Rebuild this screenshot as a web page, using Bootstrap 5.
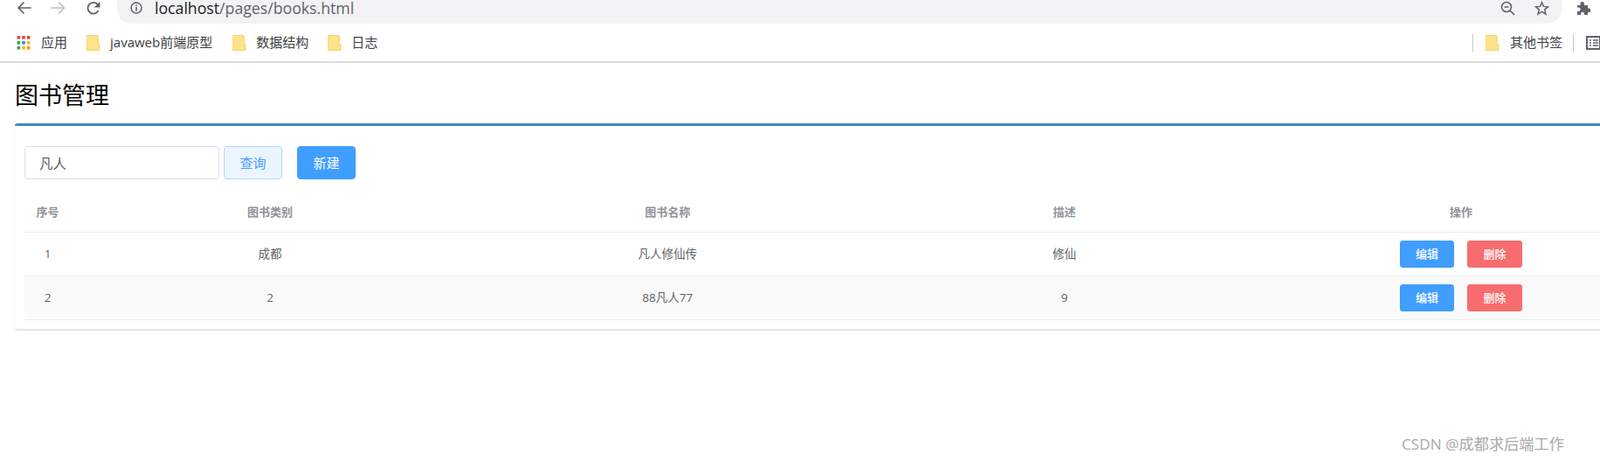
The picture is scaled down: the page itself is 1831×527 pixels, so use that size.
<!DOCTYPE html>
<html lang="zh-CN">
<head>
<meta charset="utf-8">
<title>图书管理</title>
<link href="https://cdn.jsdelivr.net/npm/bootstrap@5.3.0/dist/css/bootstrap.min.css" rel="stylesheet">
<style>
html,body{height:100%;overflow:hidden;background:#fff}
body{font-family:"Open Sans","Noto Sans CJK SC",sans-serif;width:1831px;position:relative}
.tool-row{height:27px;padding-left:19px}
.tool-row svg{display:block;flex:none;margin-top:-9px}
.ico-back,.ico-next{margin-right:22px}
.ico-reload{margin-right:18px}
.url-box{width:1653px;height:27px;background:#f1f3f4;border-radius:0 0 16px 16px;padding-left:15px;padding-right:14px}
.url-text{font-size:17.7px;color:#5f6368;margin-left:14px;line-height:18px;font-family:"Open Sans",sans-serif;margin-top:-9px;white-space:nowrap}
.url-text b{font-weight:400;color:#202124}
.ico-zoom{margin-right:22px}
.ext-ico{margin-left:17px}
.mark-row{height:45px;padding-left:19px;border-bottom:2px solid #dcdcdc;font-size:15px;color:#3c4043;white-space:nowrap}
.mark-row svg{display:block;flex:none}
.mk{display:flex;align-items:center;margin-right:22px}
.mk svg{margin-right:11px}
.mk-apps svg{margin-right:12px}
.mk-wide{margin-right:23px}
.mk-other{margin-right:12px}
.mk-other svg{margin-right:12px}
.sep-line{width:1px;height:20px;background:#c8c8c8}
.sep-first{margin-right:14px}
.list-ico{margin-left:14px}
.page-title{font-size:27px;line-height:32px;font-weight:400;color:#000;margin:0;padding:21px 0 16px 17px;height:69px}
.book-panel{margin-left:17px;width:1900px;border-top:3px solid #3c8dbc;border-bottom:2px solid #e6e6e6;border-radius:3px 0 0 3px;height:237px;padding:23px 0 0 11px;box-shadow:-1px 0 0 #f8f8f8}
.search-row{height:38px;margin-bottom:15px}
.q-input{width:223px;height:38px;border:1px solid #dcdfe6;border-radius:4px;padding:0 16px;font-size:15.500px;color:#606266;font-family:inherit;flex:none}
.q-btn{width:67px;height:38px;margin-left:5px;margin-right:17px;padding:0;font-size:15px;color:#409eff;background:#ecf5ff;border:1px solid #b3d8ff;border-radius:4px}
.n-btn{width:67px;height:38px;padding:0;font-size:15px;color:#fff;background:#409eff;border:1px solid #409eff;border-radius:4px}
.book-table{table-layout:fixed;width:1871px;margin:0;font-size:13.5px;color:#606266;text-align:center;--bs-table-bg:transparent}
.book-table th,.book-table td{padding:0;border-bottom:1px solid #ebeef5;vertical-align:middle;color:#606266}
.book-table th{height:45.6px;font-weight:700;color:#909399;font-size:13px}
.book-table td{height:50px}
.book-table .alt-row td{background:#fafafa}
.s-btn{display:inline-block;width:62px;height:31px;padding:0;font-size:13px;font-weight:500;line-height:29px;color:#fff;border-radius:3px;border:1px solid transparent;vertical-align:middle}
.s-edit{background:#409eff;border-color:#409eff}
.s-del{background:#f76d6f;border-color:#f76d6f;margin-left:15px;width:63px}
.s-btn:hover{color:#fff}
.water-mark{position:absolute;left:1604px;top:495px;font-size:17.200px;line-height:26px;color:#a9a9a9;white-space:nowrap}
</style>
</head>
<body>
<div class="tool-row d-flex align-items-center">
  <svg class="ico-back" width="17" height="16" viewBox="0 0 17 16"><path d="M16.500 8H2.500M8.500 1.500 2 8l6.500 6.500" fill="none" stroke="#5f6368" stroke-width="1.700"/></svg>
  <svg class="ico-next" width="18" height="16" viewBox="0 0 18 16"><path d="M.5 8H15M9 1.500 15.500 8 9 14.500" fill="none" stroke="#bdc1c6" stroke-width="1.700"/></svg>
  <svg class="ico-reload" width="18" height="17" viewBox="0 0 16 16"><path d="M13.200 10.500A6 6 0 1 1 12.300 3.700" fill="none" stroke="#5f6368" stroke-width="1.800"/><path d="M15 .8V7H8.800z" fill="#5f6368"/></svg>
  <div class="url-box d-flex align-items-center">
    <svg width="14" height="14" viewBox="0 0 14 14"><circle cx="7" cy="7" r="6" fill="none" stroke="#5f6368" stroke-width="1.500"/><path d="M6.200 6h1.600v4.500H6.200zM6.200 3.300h1.600v1.600H6.200z" fill="#5f6368"/></svg>
    <div class="url-text"><b>localhost</b>/pages/books.html</div>
    <svg class="ms-auto ico-zoom" width="17" height="17" viewBox="0 0 17 17"><circle cx="7" cy="7" r="5.500" fill="none" stroke="#5f6368" stroke-width="1.600"/><path d="M4.500 7h5M11 11l5 5" fill="none" stroke="#5f6368" stroke-width="1.600"/></svg>
    <svg width="17" height="17" viewBox="0 0 17 17"><path d="m8.500 1.700 2 4.700 5 .4-3.800 3.300 1.200 5-4.400-2.700-4.400 2.700 1.200-5L1.500 6.800l5-.4z" fill="none" stroke="#5f6368" stroke-width="1.500"/></svg>
  </div>
  <svg class="ext-ico" width="16" height="16" viewBox="0 0 16 16"><path d="M1 5h3.500V3.200a2.200 2.200 0 0 1 4.400 0V5h4.100v3.600h1.300a2.200 2.200 0 0 1 0 4.400H13v3H9v-1.300a2 2 0 0 0-4 0V16H1v-4h1.300a2.300 2.300 0 0 0 0-4.600H1z" fill="#5f6368"/></svg>
</div>
<div class="mark-row d-flex align-items-center">
  <div class="mk mk-apps">
    <svg width="16" height="16" viewBox="0 0 14 15"><g>
      <rect x="0" y="0" width="3.400" height="3.400" fill="#ea4335"/><rect x="5.300" y="0" width="3.400" height="3.400" fill="#ea4335"/><rect x="10.600" y="0" width="3.400" height="3.400" fill="#ea4335"/>
      <rect x="0" y="5.600" width="3.400" height="3.400" fill="#34a853"/><rect x="5.300" y="5.600" width="3.400" height="3.400" fill="#4285f4"/><rect x="10.600" y="5.600" width="3.400" height="3.400" fill="#fbbc05"/>
      <rect x="0" y="11.200" width="3.400" height="3.400" fill="#34a853"/><rect x="5.300" y="11.200" width="3.400" height="3.400" fill="#fbbc05"/><rect x="10.600" y="11.200" width="3.400" height="3.400" fill="#f29900"/></g></svg>
    <span>应用</span>
  </div>
  <div class="mk mk-wide"><svg width="16" height="18" viewBox="0 0 14 18" preserveAspectRatio="none"><path d="M1.500.5h9a1 1 0 0 1 1 1V11h1.500v5.500a1 1 0 0 1-1 1h-11a1 1 0 0 1-1-1v-15a1 1 0 0 1 1-1z" fill="#ffe38a" stroke="#f6d365"/></svg><span>javaweb前端原型</span></div>
  <div class="mk"><svg width="16" height="18" viewBox="0 0 14 18" preserveAspectRatio="none"><path d="M1.500.5h9a1 1 0 0 1 1 1V11h1.500v5.500a1 1 0 0 1-1 1h-11a1 1 0 0 1-1-1v-15a1 1 0 0 1 1-1z" fill="#ffe38a" stroke="#f6d365"/></svg><span>数据结构</span></div>
  <div class="mk"><svg width="16" height="18" viewBox="0 0 14 18" preserveAspectRatio="none"><path d="M1.500.5h9a1 1 0 0 1 1 1V11h1.500v5.500a1 1 0 0 1-1 1h-11a1 1 0 0 1-1-1v-15a1 1 0 0 1 1-1z" fill="#ffe38a" stroke="#f6d365"/></svg><span>日志</span></div>
  <div class="sep-line ms-auto sep-first"></div>
  <div class="mk mk-other"><svg width="16" height="18" viewBox="0 0 14 18" preserveAspectRatio="none"><path d="M1.500.5h9a1 1 0 0 1 1 1V11h1.500v5.500a1 1 0 0 1-1 1h-11a1 1 0 0 1-1-1v-15a1 1 0 0 1 1-1z" fill="#ffe38a" stroke="#f6d365"/></svg><span>其他书签</span></div>
  <div class="sep-line"></div>
  <svg class="list-ico" width="16" height="16" viewBox="0 0 16 16"><rect x="1" y="1" width="15" height="14" fill="none" stroke="#5f6368" stroke-width="2"/><path d="M4 5h2M8 5h6M4 8h2M8 8h6M4 11h2M8 11h6" stroke="#5f6368" stroke-width="1.400"/></svg>
</div>

<h1 class="page-title">图书管理</h1>
<div class="book-panel">
  <div class="search-row d-flex">
    <input class="q-input form-control" type="text" value="凡人" aria-label="搜索">
    <button class="btn q-btn" type="button">查询</button>
    <button class="btn n-btn" type="button">新建</button>
  </div>
  <table class="table book-table">
    <colgroup><col style="width:53px"><col style="width:456px"><col style="width:454px"><col style="width:454px"><col style="width:454px"></colgroup>
    <thead><tr><th>序号</th><th>图书类别</th><th>图书名称</th><th>描述</th><th>操作</th></tr></thead>
    <tbody>
      <tr><td>1</td><td>成都</td><td>凡人修仙传</td><td>修仙</td><td><a class="btn s-btn s-edit" href="#">编辑</a><a class="btn s-btn s-del" href="#">删除</a></td></tr>
      <tr class="alt-row"><td>2</td><td>2</td><td>88凡人77</td><td>9</td><td><a class="btn s-btn s-edit" href="#">编辑</a><a class="btn s-btn s-del" href="#">删除</a></td></tr>
    </tbody>
  </table>
</div>
<div class="water-mark">CSDN @成都求后端工作</div>
<script src="https://cdn.jsdelivr.net/npm/bootstrap@5.3.0/dist/js/bootstrap.bundle.min.js"></script>
</body>
</html>
